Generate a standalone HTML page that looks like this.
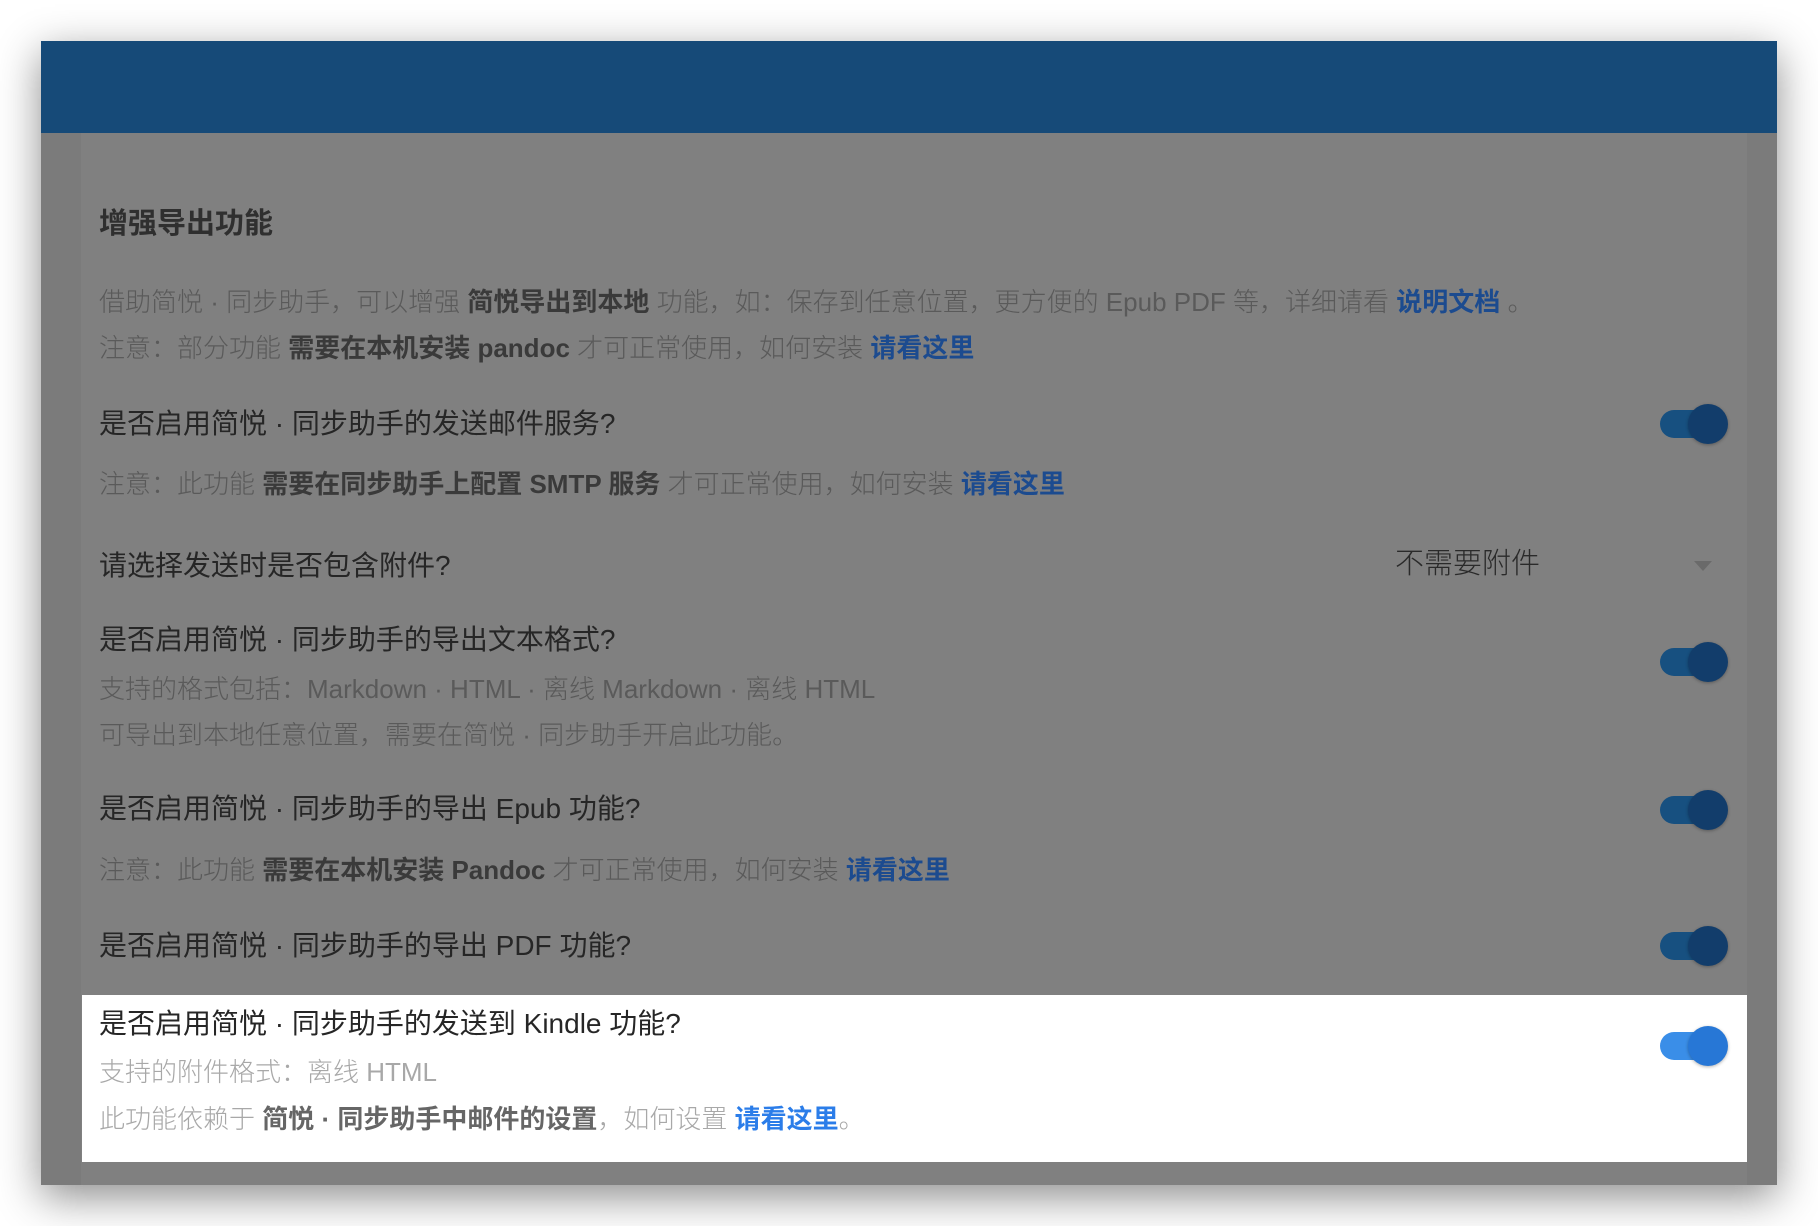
<!DOCTYPE html>
<html><head><meta charset="utf-8"><style>
*{margin:0;padding:0;box-sizing:border-box}
body{width:1818px;height:1226px;background:#fff;position:relative;overflow:hidden;font-family:"Liberation Sans","Noto Sans CJK SC",sans-serif}
.win{position:absolute;left:41px;top:41px;width:1736px;height:1144px;background:#7b7b7b;box-shadow:0 12px 40px rgba(0,0,0,.45)}
.hdr{position:absolute;left:41px;top:41px;width:1736px;height:92px;background:#164a78}
.card{position:absolute;left:81px;top:133px;width:1666px;height:1052px;background:#808080}
.t{position:absolute;white-space:nowrap;line-height:1}
.title{left:99px;top:210px;font-size:29px;font-weight:bold;color:#2f2f2f}
.n{left:99px;font-size:26px;color:#5a5a5a;font-weight:300}
.n b{color:#3a3a3a;font-weight:bold}
.n a{color:#1c4b8f;font-weight:bold;text-decoration:none}
.q{left:99px;font-size:28px;color:#262626}
.tg{position:absolute;left:1660px;width:68px;height:28px}
.tg .tr{position:absolute;left:0;top:0;width:58px;height:28px;border-radius:14px;background:#175080}
.tg .kn{position:absolute;left:28px;top:-6px;width:40px;height:40px;border-radius:50%;background:#123d6b;box-shadow:0 1px 3px rgba(0,0,0,.3)}
.hl{position:absolute;left:82px;top:995px;width:1665px;height:167px;background:#fff}
.hl .n{color:#a8a8a8}
.hl .n b{color:#666}
.hl .n a{color:#2b7de9}
</style></head><body>
<div class="win"></div>
<div class="hdr"></div>
<div class="card"></div>
<div class="t title">增强导出功能</div>
<div class="t n" style="top:289px">借助简悦 · 同步助手，可以增强 <b>简悦导出到本地</b> 功能，如：保存到任意位置，更方便的 Epub PDF 等，详细请看 <a>说明文档</a> 。</div>
<div class="t n" style="top:335px">注意：部分功能 <b>需要在本机安装 pandoc</b> 才可正常使用，如何安装 <a>请看这里</a></div>
<div class="t q" style="top:410px">是否启用简悦 · 同步助手的发送邮件服务?</div>
<div class="tg" style="top:410px"><div class="tr"></div><div class="kn"></div></div>
<div class="t n" style="top:471px">注意：此功能 <b>需要在同步助手上配置 SMTP 服务</b> 才可正常使用，如何安装 <a>请看这里</a></div>
<div class="t q" style="top:552px">请选择发送时是否包含附件?</div>
<div class="t" style="left:1395px;top:550px;font-size:29px;color:#2a2a2a;font-weight:300">不需要附件</div>
<div style="position:absolute;left:1694px;top:561px;width:0;height:0;border-left:9px solid transparent;border-right:9px solid transparent;border-top:10px solid #6a6a6a"></div>
<div class="t q" style="top:626px">是否启用简悦 · 同步助手的导出文本格式?</div>
<div class="tg" style="top:648px"><div class="tr"></div><div class="kn"></div></div>
<div class="t n" style="top:676px">支持的格式包括：Markdown · HTML · 离线 Markdown · 离线 HTML</div>
<div class="t n" style="top:722px">可导出到本地任意位置，需要在简悦 · 同步助手开启此功能。</div>
<div class="t q" style="top:795px">是否启用简悦 · 同步助手的导出 Epub 功能?</div>
<div class="tg" style="top:796px"><div class="tr"></div><div class="kn"></div></div>
<div class="t n" style="top:857px">注意：此功能 <b>需要在本机安装 Pandoc</b> 才可正常使用，如何安装 <a>请看这里</a></div>
<div class="t q" style="top:932px">是否启用简悦 · 同步助手的导出 PDF 功能?</div>
<div class="tg" style="top:932px"><div class="tr"></div><div class="kn"></div></div>
<div class="hl">
<div class="t q" style="left:17px;top:15px">是否启用简悦 · 同步助手的发送到 Kindle 功能?</div>
<div class="tg" style="left:1578px;top:37px"><div class="tr" style="background:#3a8ee8"></div><div class="kn" style="background:#2777d6"></div></div>
<div class="t n" style="left:17px;top:64px">支持的附件格式：离线 HTML</div>
<div class="t n" style="left:17px;top:111px">此功能依赖于 <b>简悦 · 同步助手中邮件的设置</b>，如何设置 <a>请看这里</a>。</div>
</div>
</body></html>
